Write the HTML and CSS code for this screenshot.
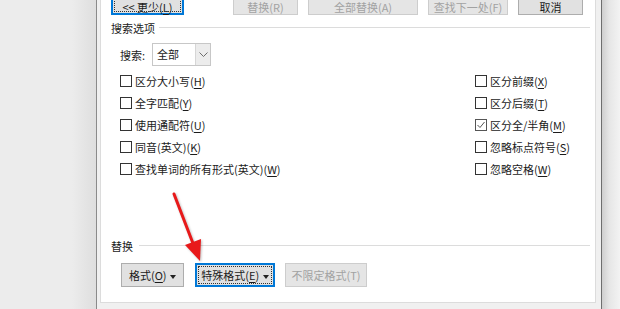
FILE: index.html
```html
<!DOCTYPE html>
<html lang="zh-CN">
<head>
    <meta charset="UTF-8">
    <title>查找和替换</title>
    <link rel="stylesheet" href="styles.css">
</head>
<body>
    <div class="screen">
        <div class="side-left"></div>
        <div class="dialog">
            <div class="panel">
                <div class="top-buttons">
                    <button class="btn btn-focus" type="button">&lt;&lt; 更少(<u>L</u>)</button>
                    <button class="btn w65 push" type="button" disabled>替换(R)</button>
                    <button class="btn w110" type="button" disabled>全部替换(A)</button>
                    <button class="btn w80" type="button" disabled>查找下一处(F)</button>
                    <button class="btn w65" type="button">取消</button>
                </div>

                <div class="group-title"><span>搜索选项</span><i></i></div>

                <div class="search-row">
                    <span class="search-label">搜索:</span>
                    <div class="combo">
                        <span class="combo-text">全部</span>
                        <span class="combo-arrow">
                            <svg width="9" height="6" viewBox="0 0 9 6"><polyline points="0.5,0.5 4.5,4.5 8.5,0.5" fill="none" stroke="#6d6d6d" stroke-width="1"/></svg>
                        </span>
                    </div>
                </div>

                <div class="options">
                    <label class="opt"><span class="box"></span>区分大小写(<u>H</u>)</label>
                    <label class="opt"><span class="box"></span>区分前缀(<u>X</u>)</label>
                    <label class="opt"><span class="box"></span>全字匹配(<u>Y</u>)</label>
                    <label class="opt"><span class="box"></span>区分后缀(<u>T</u>)</label>
                    <label class="opt"><span class="box"></span>使用通配符(<u>U</u>)</label>
                    <label class="opt"><span class="box checked"><svg width="10" height="10" viewBox="0 0 10 10"><polyline points="1.5,5 4,7.5 8.5,2" fill="none" stroke="#555" stroke-width="1"/></svg></span>区分全/半角(<u>M</u>)</label>
                    <label class="opt"><span class="box"></span>同音(英文)(<u>K</u>)</label>
                    <label class="opt"><span class="box"></span>忽略标点符号(<u>S</u>)</label>
                    <label class="opt"><span class="box"></span>查找单词的所有形式(英文)(<u>W</u>)</label>
                    <label class="opt"><span class="box"></span>忽略空格(<u>W</u>)</label>
                </div>

                <div class="group-title replace-title"><span>替换</span><i></i></div>

                <div class="bottom-buttons">
                    <button class="btn w63" type="button">格式(<u>O</u>) <b class="caret"></b></button>
                    <button class="btn btn-focus w80" type="button">特殊格式(<u>E</u>) <b class="caret"></b></button>
                    <button class="btn w82" type="button" disabled>不限定格式(T)</button>
                </div>
            </div>
        </div>
        <div class="side-right"></div>
    </div>

    <svg class="arrow" width="620" height="309" viewBox="0 0 620 309">
        <line x1="174" y1="194" x2="194" y2="246" stroke="#e8191a" stroke-width="3" stroke-linecap="round"/>
        <polygon points="200,261 185,245 201,239" fill="#e8191a"/>
    </svg>
</body>
</html>
```

FILE: styles.css
```css
body {
    margin: 0;
    height: 309px;
    overflow: hidden;
    background: #ececec;
    font-family: "Noto Sans CJK SC", "Liberation Sans", sans-serif;
    font-size: 11px;
    color: #1b1b1b;
}
.screen {
    display: flex;
    height: 309px;
}
.side-left {
    width: 96px;
    background: linear-gradient(to right, #ececec 75%, #dedede);
}
.dialog {
    width: 496px;
    border-left: 1px solid #8a8a8a;
    border-right: 1px solid #6f6f6f;
    background: #f0f0f0;
    padding: 0 5px 6px 3px;
    display: flex;
}
.side-right {
    flex: 1;
    background: linear-gradient(to right, #cfcfcf, #e6e6e6 40%, #f3f3f3);
}
.panel {
    flex: 1;
    background: #fff;
    border: 1px solid #dcdcdc;
    border-top: none;
    padding: 0 5px 15px 10px;
}
u {
    text-decoration: underline;
    text-underline-offset: 2px;
}

/* buttons */
.btn {
    box-sizing: border-box;
    flex: none;
    height: 24px;
    padding: 0;
    border: 1px solid #adadad;
    background: #e1e1e1;
    font-family: inherit;
    font-size: 11px;
    line-height: 23px;
    color: #1b1b1b;
    text-align: center;
    white-space: nowrap;
}
.btn:disabled {
    background: #e5e5e5;
    border-color: #cdcdcd;
    color: #a2a2a2;
}
.btn-focus {
    border-color: #0078d7;
    box-shadow: inset 0 0 0 1px #0078d7;
    outline: 1px dotted #333;
    outline-offset: -4px;
}
.w63 { width: 63px; }
.w65 { width: 65px; }
.w80 { width: 80px; }
.w82 { width: 82px; }
.w110 { width: 110px; }
.caret {
    display: inline-block;
    vertical-align: middle;
    margin-left: 1px;
    width: 0;
    height: 0;
    border-left: 3.5px solid transparent;
    border-right: 3.5px solid transparent;
    border-top: 4px solid #222;
}

.top-buttons {
    display: flex;
    gap: 10px;
    margin-top: -9px;
}
.top-buttons .btn {
    line-height: 30px;
}
.top-buttons .btn-focus {
    width: 73px;
}
.top-buttons .push {
    margin-left: 39px;
}

/* group titles */
.group-title {
    display: flex;
    align-items: center;
    gap: 4px;
    height: 14px;
    margin-top: 6px;
    line-height: 14px;
}
.group-title i {
    flex: 1;
    height: 1px;
    background: #dcdcdc;
    margin-top: -1px;
}
.replace-title {
    margin-top: 59px;
    gap: 6px;
}

/* search combo */
.search-row {
    display: flex;
    align-items: center;
    margin-top: 8px;
    padding-left: 9px;
}
.search-label {
    width: 32px;
}
.combo {
    box-sizing: border-box;
    width: 59px;
    height: 23px;
    border: 1px solid #c7c7c7;
    display: flex;
}
.combo-text {
    flex: 1;
    padding-left: 4px;
    line-height: 21px;
}
.combo-arrow {
    width: 14px;
    background: #ececec;
    border-left: 1px solid #d6d6d6;
    display: flex;
    align-items: center;
    justify-content: center;
}

/* check options */
.options {
    display: grid;
    grid-template-columns: 355px auto;
    grid-auto-rows: 22px;
    margin-top: 4px;
    padding-left: 9px;
}
.opt {
    display: flex;
    align-items: center;
}
.box {
    box-sizing: border-box;
    width: 12px;
    height: 12px;
    border: 1px solid #333;
    margin-right: 3px;
    display: flex;
    align-items: center;
    justify-content: center;
}
.box.checked {
    border-color: #555;
}

.bottom-buttons {
    display: flex;
    gap: 11px;
    margin-top: 10px;
    padding-left: 10px;
}
.bottom-buttons .w82 {
    margin-left: -1px;
}

.arrow {
    position: absolute;
    left: 0;
    top: 0;
    pointer-events: none;
    filter: drop-shadow(1px 1px 1px rgba(0, 0, 0, 0.25));
}
```
